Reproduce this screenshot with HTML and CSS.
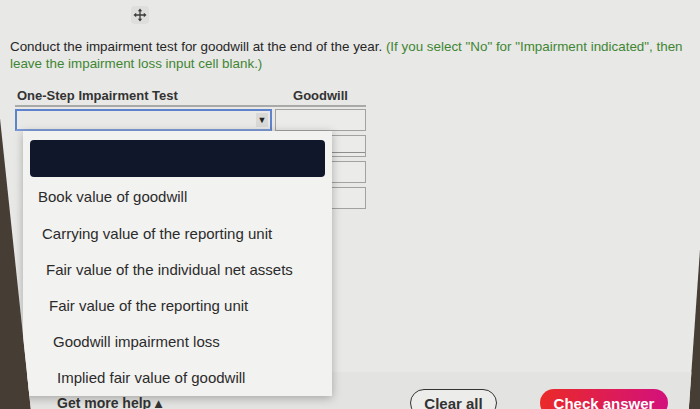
FILE: index.html
```html
<!DOCTYPE html>
<html>
<head>
    <title>Impairment Test</title>
    <link rel="stylesheet" href="styles.css">
</head>
<body>
    <div class="screen">
        <div class="toolbar">
            <span class="move-icon">
                <svg width="14" height="14" viewBox="0 0 14 14">
                    <path d="M7 2v10M2 7h10" stroke="#3a3a3a" stroke-width="1.3"/>
                    <path d="M7 0.5 4.8 3.2h4.4zM7 13.5 4.8 10.8h4.4zM0.5 7 3.2 4.8v4.4zM13.5 7 10.8 4.8v4.4z" fill="#3a3a3a"/>
                </svg>
            </span>
        </div>

        <p class="question">Conduct the impairment test for goodwill at the end of the year. <span class="hint">(If you select "No" for "Impairment indicated", then leave the impairment loss input cell blank.)</span></p>

        <div class="worksheet">
            <div class="ws-head">
                <span class="col-label">One-Step Impairment Test</span>
                <span class="col-amt">Goodwill</span>
            </div>
            <div class="ws-row">
                <div class="select focused"><span class="arrow">&#9660;</span></div>
                <div class="cell"></div>
            </div>
            <div class="ws-row">
                <div class="select"></div>
                <div class="cell total"></div>
            </div>
            <div class="ws-row">
                <div class="select"></div>
                <div class="cell"></div>
            </div>
            <div class="ws-row">
                <div class="select"></div>
                <div class="cell"></div>
            </div>

            <ul class="dropdown">
                <li class="opt-selected"></li>
                <li>Book value of goodwill</li>
                <li>Carrying value of the reporting unit</li>
                <li>Fair value of the individual net assets</li>
                <li>Fair value of the reporting unit</li>
                <li>Goodwill impairment loss</li>
                <li>Implied fair value of goodwill</li>
            </ul>
        </div>

        <div class="footer">
            <span class="help">Get more help &#9652;</span>
            <div class="actions">
                <button class="btn-clear">Clear all</button>
                <button class="btn-check">Check answer</button>
            </div>
        </div>
    </div>
</body>
</html>
```

FILE: styles.css
```css
body {
  margin: 0;
  background-color: #463d35; /* desk behind the monitor */
  font-family: "Liberation Sans", Arial, sans-serif;
  color: #2a2a2a;
}

.screen {
  height: 409px;
  overflow: hidden;
  display: flex;
  flex-direction: column;
  background-color: #e8e8e6;
  clip-path: polygon(0 0, 100% 0, 100% 61%, 98.4% 100%, 4.4% 100%, 0 29%);
}

.toolbar {
  height: 30px;
  padding-left: 131px;
  display: flex;
  align-items: center;
}

.move-icon {
  width: 18px;
  height: 18px;
  display: flex;
  align-items: center;
  justify-content: center;
  border-radius: 4px;
  background-color: #dededc;
}

.question {
  margin: 8px 0 0;
  padding-left: 10px;
  padding-right: 12px;
  font-size: 13.4px;
  line-height: 17px;
  color: #262626;
}

.hint {
  color: #3f8633;
}

.worksheet {
  position: relative;
  width: 351px;
  margin: 16px 0 0 15px;
}

.ws-head {
  display: grid;
  grid-template-columns: 257px 1fr;
  gap: 3px;
  height: 17px;
  font-size: 13px;
  font-weight: bold;
  color: #333;
  border-bottom: 2px solid #a9a9a7;
}

.col-label {
  padding-left: 2px;
}

.col-amt {
  text-align: center;
}

.ws-row {
  display: grid;
  grid-template-columns: 257px 1fr;
  gap: 3px;
  height: 22px;
  margin-top: 4px;
}

.ws-head + .ws-row {
  margin-top: 2px;
}

.select {
  position: relative;
  background-color: #e9e9e7;
}

.select.focused {
  border: 2px solid #5e83cc;
  border-bottom-color: #7d9bd6;
}

.arrow {
  position: absolute;
  right: 2px;
  top: 2px;
  width: 12px;
  height: 14px;
  font-size: 9px;
  line-height: 14px;
  text-align: center;
  color: #222;
  background-color: #d9d9d7;
}

.cell {
  border: 1px solid #a2a2a0;
  background-color: #ebebe9;
}

.cell.total {
  box-shadow: inset 0 -3px 0 #ebebe9, inset 0 -4px 0 #8e8e8c;
}

.dropdown {
  position: absolute;
  left: 8px;
  top: 43px;
  width: 309px;
  height: 265px;
  margin: 0;
  padding: 9px 7px 0;
  box-sizing: border-box;
  list-style: none;
  background-color: #f2f2f0;
  box-shadow: 0 2px 9px rgba(0, 0, 0, 0.28);
}

.dropdown li {
  height: 36px;
  line-height: 36px;
  font-size: 15px;
  color: #2b2b2b;
  white-space: nowrap;
}

.dropdown li.opt-selected {
  height: 37px;
  margin-bottom: 1px;
  border-radius: 4px;
  background-color: #11172a;
}

/* the photo leans, so each row starts a little further right */
.dropdown li:nth-child(2) { padding-left: 8px; height: 38px; line-height: 38px; }
.dropdown li:nth-child(3) { padding-left: 12px; }
.dropdown li:nth-child(4) { padding-left: 16px; }
.dropdown li:nth-child(5) { padding-left: 19px; }
.dropdown li:nth-child(6) { padding-left: 23px; }
.dropdown li:nth-child(7) { padding-left: 27px; }

.footer {
  margin-top: auto;
  height: 37px;
  flex-shrink: 0;
  display: flex;
  align-items: flex-start;
  padding: 17px 32px 0 57px;
  box-sizing: border-box;
  background-color: #e3e3e1;
}

.help {
  margin-top: 6px;
  font-size: 14px;
  font-weight: bold;
  color: #333;
}

.actions {
  margin-left: auto;
  display: flex;
  gap: 43px;
}

.actions button {
  height: 28px;
  border-radius: 14px;
  font-family: "Liberation Sans", Arial, sans-serif;
  font-size: 15px;
  font-weight: bold;
  padding: 0;
}

.btn-clear {
  width: 87px;
  background-color: #ececea;
  border: 1.5px solid #333;
  color: #333;
}

.btn-check {
  width: 128px;
  border: none;
  color: white;
  font-size: 16px;
  background: linear-gradient(90deg, #ea2a28, #d3117c);
}
```
